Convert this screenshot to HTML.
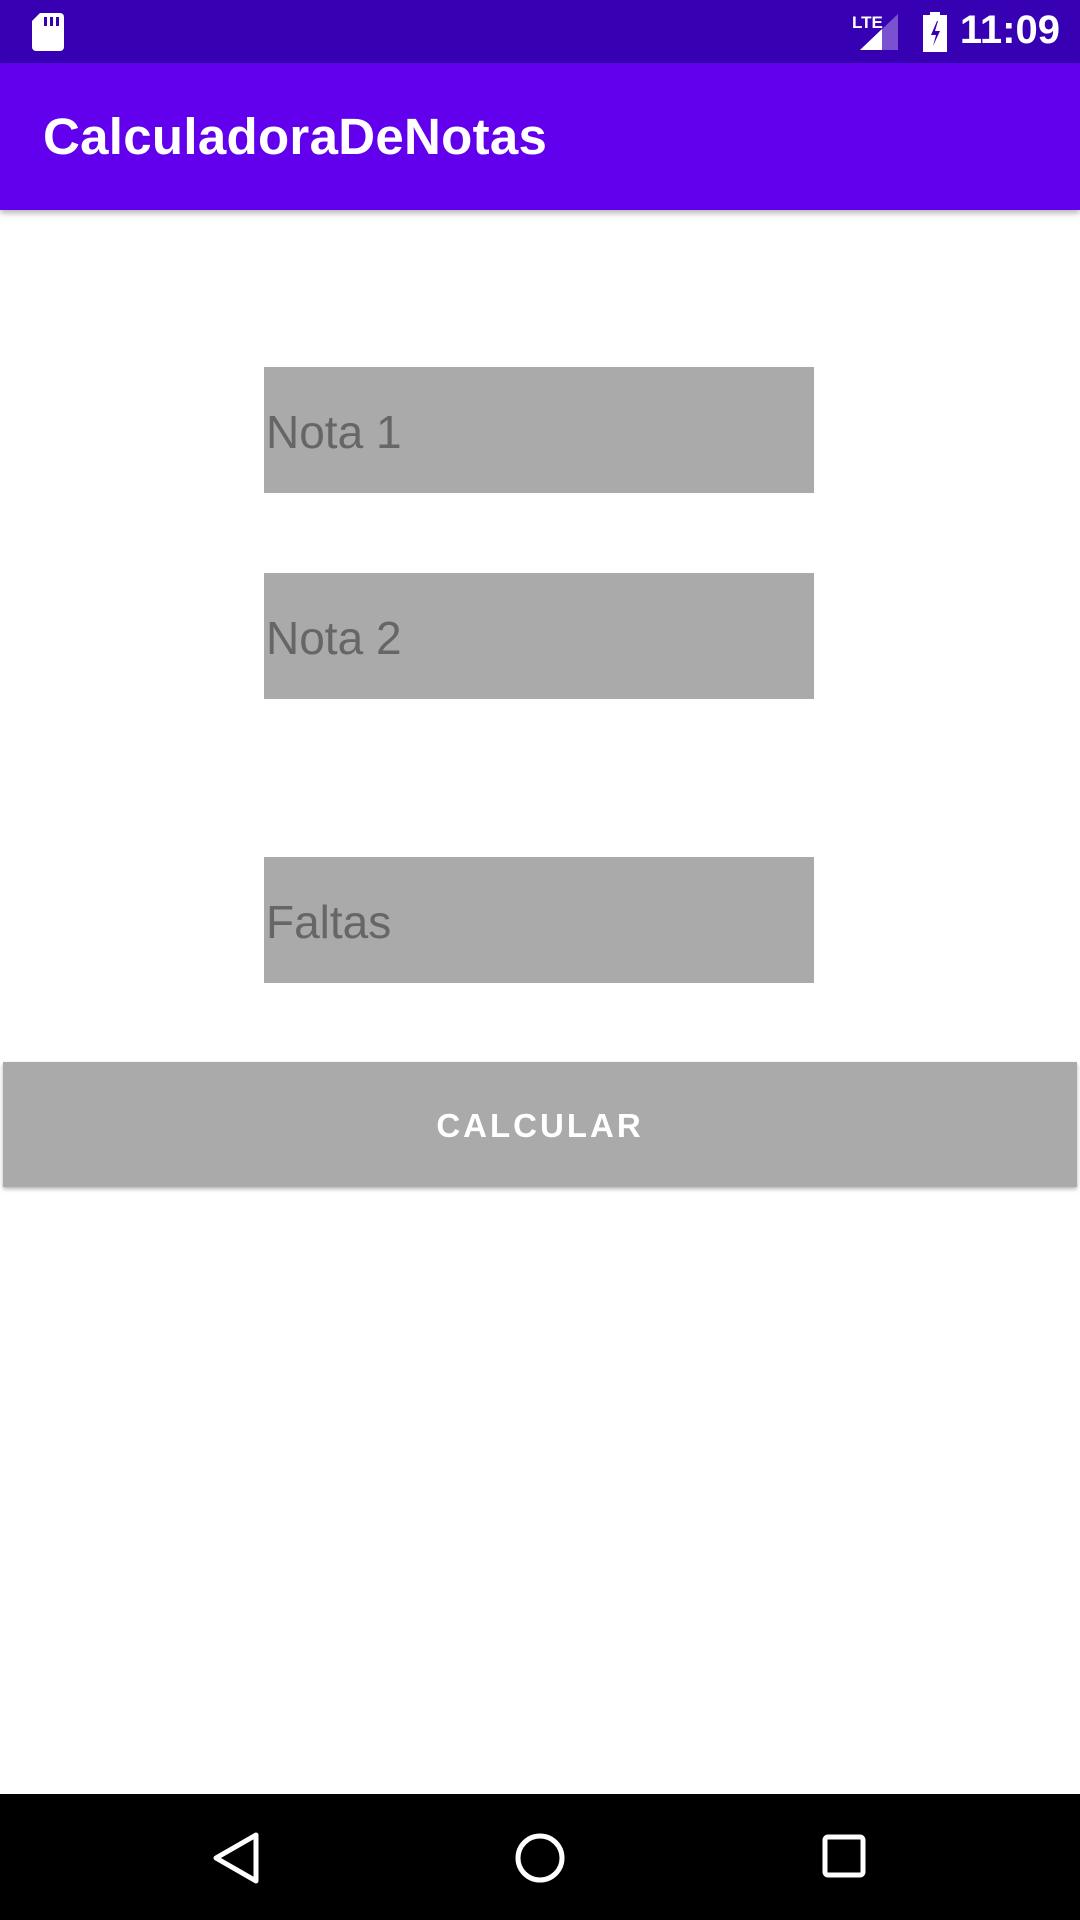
<!DOCTYPE html>
<html><head><meta charset="utf-8"><style>
*{margin:0;padding:0;box-sizing:border-box}
body{width:1080px;height:1920px;background:#fff;position:relative;overflow:hidden;font-family:"Liberation Sans",Roboto,sans-serif}
.sb{position:absolute;top:0;left:0;width:1080px;height:63px;background:#3700B3}
.ab{position:absolute;top:63px;left:0;width:1080px;height:147px;background:#6200EE;box-shadow:0 3px 6px rgba(0,0,0,.3)}
.ab span{position:absolute;left:43px;top:44px;color:#fff;font-size:51px;font-weight:bold;letter-spacing:0.3px}
.f{position:absolute;left:264px;width:550px;height:126px;background:#aaa;color:#666;font-size:46px;line-height:130px;padding-left:2px}
.btn{position:absolute;left:3px;top:1062px;width:1074px;height:125px;background:#aaa;color:#fff;font-size:33px;letter-spacing:3px;text-align:center;line-height:128px;box-shadow:0 2px 4px rgba(0,0,0,.3);font-weight:bold}
.nb{position:absolute;top:1794px;left:0;width:1080px;height:126px;background:#000}
.time{position:absolute;right:20px;top:8px;color:#fff;font-size:40px;font-weight:bold}
</style></head><body>
<div class="sb">
<svg style="position:absolute;left:32px;top:13px" width="32" height="38" viewBox="0 0 32 38"><path d="M8 0H28a4 4 0 0 1 4 4V34a4 4 0 0 1-4 4H4a4 4 0 0 1-4-4V8Z" fill="#fff"/><rect x="12" y="4" width="3" height="9" fill="#3700B3"/><rect x="18" y="4" width="3" height="9" fill="#3700B3"/><rect x="24" y="4" width="3" height="9" fill="#3700B3"/></svg>
<svg style="position:absolute;left:852px;top:12px" width="50" height="40" viewBox="0 0 50 40"><text x="0" y="16" fill="#fff" font-size="17" font-weight="bold" font-family="Liberation Sans Narrow,Liberation Sans">LTE</text><polygon points="8,38 46,38 46,2" fill="#7a52d0"/><polygon points="8,38 30,38 30,17" fill="#fff"/></svg>
<svg style="position:absolute;left:922px;top:12px" width="26" height="40" viewBox="0 0 26 40"><rect x="8" y="0" width="10" height="4" fill="#fff"/><rect x="1" y="3" width="24" height="37" fill="#fff"/><path d="M15 9 9 23h5l-3 11 7-15h-5l3-10z" fill="#3700B3"/></svg>
<div class="time">11:09</div>
</div>
<div class="ab"><span>CalculadoraDeNotas</span></div>
<div class="f" style="top:367px">Nota 1</div>
<div class="f" style="top:573px">Nota 2</div>
<div class="f" style="top:857px">Faltas</div>
<div class="btn">CALCULAR</div>
<div class="nb">
<svg style="position:absolute;left:212px;top:38px" width="50" height="52" viewBox="0 0 50 52"><polygon points="44,3 44,49 4,26" fill="none" stroke="#fff" stroke-width="5" stroke-linejoin="round"/></svg>
<svg style="position:absolute;left:514px;top:38px" width="52" height="52" viewBox="0 0 52 52"><circle cx="26" cy="26" r="22" fill="none" stroke="#fff" stroke-width="5"/></svg>
<svg style="position:absolute;left:822px;top:40px" width="44" height="44" viewBox="0 0 44 44"><rect x="3" y="3" width="38" height="38" rx="3" fill="none" stroke="#fff" stroke-width="5"/></svg>
</div>
</body></html>
